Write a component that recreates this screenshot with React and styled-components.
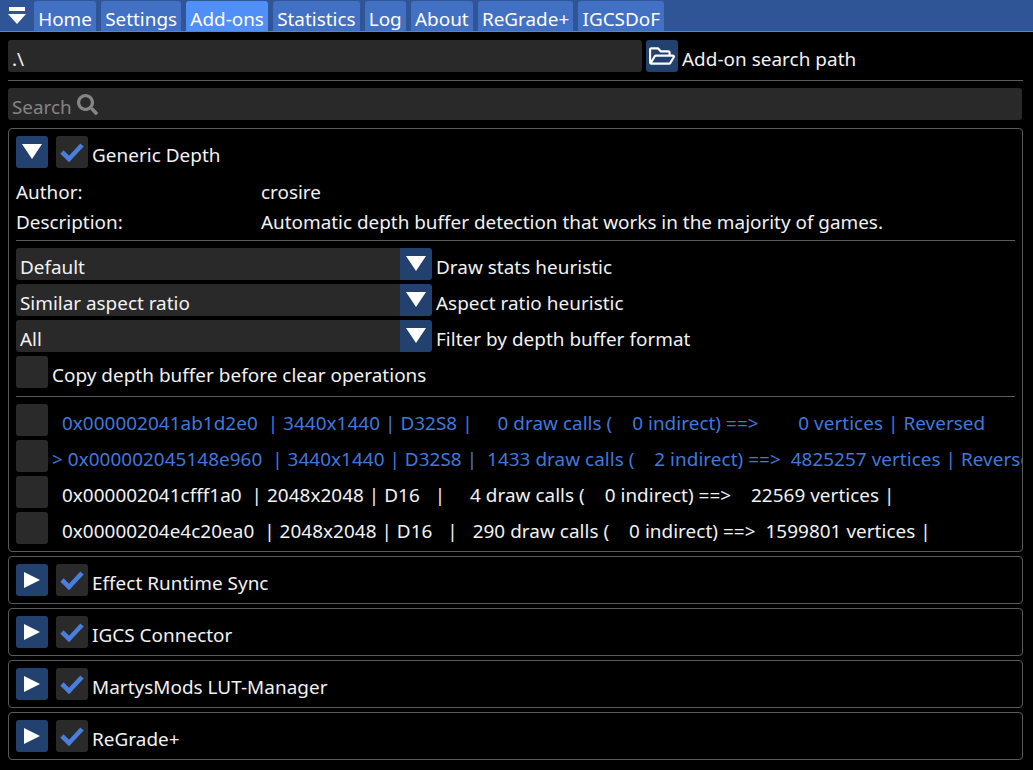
import React from "react";
import styled, { createGlobalStyle } from "styled-components";
import { FaRegFolderOpen, FaSearch } from "react-icons/fa";

const tabs = ["Home", "Settings", "Add-ons", "Statistics", "Log", "About", "ReGrade+", "IGCSDoF"];

const combos = [
  { value: "Default", label: "Draw stats heuristic" },
  { value: "Similar aspect ratio", label: "Aspect ratio heuristic" },
  { value: "All", label: "Filter by depth buffer format" },
];

const buffers = [
  { text: "  0x000002041ab1d2e0  | 3440x1440 | D32S8 |     0 draw calls (    0 indirect) ==>        0 vertices | Reversed", active: true },
  { text: "> 0x000002045148e960  | 3440x1440 | D32S8 |  1433 draw calls (    2 indirect) ==>  4825257 vertices | Reversed", active: true },
  { text: "  0x000002041cfff1a0  | 2048x2048 | D16   |     4 draw calls (    0 indirect) ==>    22569 vertices | ", active: false },
  { text: "  0x00000204e4c20ea0  | 2048x2048 | D16   |   290 draw calls (    0 indirect) ==>  1599801 vertices | ", active: false },
];

const collapsed = ["Effect Runtime Sync", "IGCS Connector", "MartysMods LUT-Manager", "ReGrade+"];

const GlobalStyle = createGlobalStyle`
  html, body {
    margin: 0;
    background: #000;
  }
  body {
    font-family: "Noto Sans", sans-serif;
    font-size: 18.9px;
    color: #f2f2f2;
  }
`;

const Window = styled.div`
  width: 1033px;
  height: 770px;
  overflow: hidden;
  background: #000;
`;

const TabBar = styled.div`
  display: flex;
  align-items: flex-end;
  height: 31px;
  background: #2f5596;
  border-bottom: 1px solid #4a86e8;
  gap: 5px;
`;

const MenuToggle = styled.div`
  width: 34px;
  height: 31px;
  margin-right: -5px;
  display: flex;
  justify-content: center;
  padding-top: 6px;
  box-sizing: border-box;
`;

const Tab = styled.div`
  height: 30px;
  padding: 5px 4.15px 0;
  box-sizing: border-box;
  display: flex;
  align-items: center;
  border-radius: 3px 3px 0 0;
  background: ${(p) => (p.$active ? "#4f8ff7" : "#4271c4")};
  color: #fff;
`;

const Content = styled.div`
  padding: 8px 10px 0 8px;
  display: flex;
  flex-direction: column;
`;

const Row = styled.div`
  display: flex;
  align-items: center;
  height: 32px;
  gap: 4px;
  flex: none;
`;

const Label = styled.span`
  padding-top: 5px;
  white-space: pre;
  letter-spacing: 0.04px;
`;

const Input = styled.div`
  flex: none;
  width: ${(p) => p.$width}px;
  height: 32px;
  box-sizing: border-box;
  padding: 5px 4px 0;
  display: flex;
  align-items: center;
  gap: 5px;
  background: #292929;
  border-radius: 3px;
  white-space: pre;
  color: ${(p) => (p.$hint ? "#858585" : "#f2f2f2")};
`;

const SearchGlyph = styled(FaSearch)`
  margin-top: -5px;
`;

const IconButton = styled.div`
  width: 32px;
  height: 32px;
  flex: none;
  display: flex;
  align-items: center;
  justify-content: center;
  background: #23416f;
  border-radius: 3px;
  color: #fff;
`;

const Check = styled.div`
  width: 32px;
  height: 32px;
  flex: none;
  display: flex;
  align-items: center;
  justify-content: center;
  background: #2a2a2a;
  border-radius: 3px;
  margin-left: ${(p) => p.$left || 0}px;
`;

const Separator = styled.div`
  height: 1px;
  flex: none;
  background: #5a5a5a;
  margin: ${(p) => p.$margin || "8px 0 7px"};
`;

const Panel = styled.div`
  border: 1px solid #5a5a5a;
  border-radius: 4px;
  padding: 7px;
  margin-top: ${(p) => p.$top || 4}px;
  display: flex;
  flex-direction: column;
`;

const Info = styled.div`
  display: grid;
  grid-template-columns: 245px 1fr;
  grid-auto-rows: 30px;
  align-items: center;
  margin-top: 9px;
`;

const Combo = styled.div`
  width: 416px;
  height: 32px;
  flex: none;
  display: flex;
`;

const ComboValue = styled.div`
  flex: 1;
  display: flex;
  align-items: center;
  padding: 5px 0 0 4px;
  background: #292929;
  border-radius: 3px 0 0 3px;
`;

const ComboArrow = styled(IconButton)`
  border-radius: 0 3px 3px 0;
`;

const Stack = styled.div`
  display: flex;
  flex-direction: column;
  gap: 4px;
`;

const BufferText = styled.div`
  white-space: pre;
  overflow: hidden;
  flex: 1;
  min-width: 0;
  margin-right: -7px;
  padding-top: 5px;
  letter-spacing: 0.05px;
  color: ${(p) => (p.$active ? "#4178dc" : "#f2f2f2")};
`;

const Triangle = ({ open }) => (
  <svg width="32" height="32" viewBox="0 0 32 32">
    <polygon points={open ? "6,8 26,8 16,23" : "8,8 24,16 8,24"} fill="#fff" />
  </svg>
);

const CheckMark = () => (
  <svg width="32" height="32" viewBox="0 0 32 32">
    <polyline points="6,16 13,23 26,9" fill="none" stroke="#4a7fe0" strokeWidth="4.6" />
  </svg>
);

const MenuIcon = () => (
  <svg width="18" height="20" viewBox="0 0 18 20">
    <rect x="1" y="1" width="16" height="4" fill="#fff" />
    <polygon points="0,8 18,8 9,18" fill="#fff" />
  </svg>
);

const AddonHeader = ({ name, open }) => (
  <Row>
    <IconButton>
      <Triangle open={open} />
    </IconButton>
    <Check $left={4}>
      <CheckMark />
    </Check>
    <Label>{name}</Label>
  </Row>
);

export default function App() {
  return (
    <Window>
      <GlobalStyle />
      <TabBar>
        <MenuToggle>
          <MenuIcon />
        </MenuToggle>
        {tabs.map((t) => (
          <Tab key={t} $active={t === "Add-ons"}>
            {t}
          </Tab>
        ))}
      </TabBar>
      <Content>
        <Row>
          <Input $width={634}>.\</Input>
          <IconButton>
            <FaRegFolderOpen size={26} />
          </IconButton>
          <Label>Add-on search path</Label>
        </Row>
        <Separator />
        <Input $hint $width={1014}>
          Search
          <SearchGlyph size={21} />
        </Input>
        <Panel $top={8}>
          <AddonHeader name="Generic Depth" open />
          <Info>
            <span>Author:</span>
            <span>crosire</span>
            <span>Description:</span>
            <span>Automatic depth buffer detection that works in the majority of games.</span>
          </Info>
          <Separator $margin="3px 0 7px" />
          <Stack>
            {combos.map((c) => (
              <Row key={c.label}>
                <Combo>
                  <ComboValue>{c.value}</ComboValue>
                  <ComboArrow>
                    <Triangle open />
                  </ComboArrow>
                </Combo>
                <Label>{c.label}</Label>
              </Row>
            ))}
            <Row>
              <Check />
              <Label>Copy depth buffer before clear operations</Label>
            </Row>
          </Stack>
          <Separator />
          <Stack>
            {buffers.map((b) => (
              <Row key={b.text}>
                <Check />
                <BufferText $active={b.active}>{b.text}</BufferText>
              </Row>
            ))}
          </Stack>
        </Panel>
        {collapsed.map((name) => (
          <Panel key={name}>
            <AddonHeader name={name} />
          </Panel>
        ))}
      </Content>
    </Window>
  );
}
